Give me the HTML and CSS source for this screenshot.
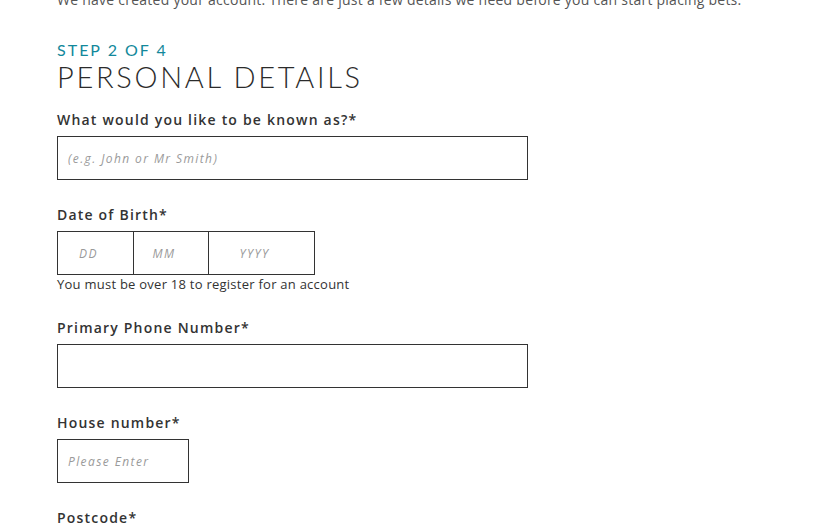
FILE: index.html
```html
<!DOCTYPE html>
<html lang="en">
<head>
<meta charset="utf-8">
<title>Personal Details</title>
<link rel="stylesheet" href="styles.css">
</head>
<body>
<main class="page">
  <p class="intro">We have created your account. There are just a few details we need before you can start placing bets.</p>
  <div class="heading">
    <div class="step">STEP 2 OF 4</div>
    <h1 class="title">PERSONAL DETAILS</h1>
  </div>
  <form class="form">
    <div class="field">
      <label class="label">What would you like to be known as?*</label>
      <input class="input input-wide" type="text" placeholder="(e.g. John or Mr Smith)">
    </div>
    <div class="field">
      <label class="label">Date of Birth*</label>
      <div class="dob">
        <input class="input dob-box dob-dd" type="text" placeholder="DD">
        <input class="input dob-box dob-mm" type="text" placeholder="MM">
        <input class="input dob-box dob-yy" type="text" placeholder="YYYY">
      </div>
      <div class="hint">You must be over 18 to register for an account</div>
    </div>
    <div class="field">
      <label class="label">Primary Phone Number*</label>
      <input class="input input-wide" type="tel">
    </div>
    <div class="field">
      <label class="label">House number*</label>
      <input class="input input-small" type="text" placeholder="Please Enter">
    </div>
    <div class="field">
      <label class="label">Postcode*</label>
    </div>
  </form>
</main>
</body>
</html>
```
FILE: styles.css
```css
html, body {
  margin: 0;
  padding: 0;
  background: #fff;
  overflow: hidden;
}
body {
  font-family: "Open Sans", "Liberation Sans", sans-serif;
  color: #333;
}
.page {
  padding-left: 57px;
}
.intro {
  margin: -10px 0 0 0;
  font-size: 14px;
  line-height: 20px;
  letter-spacing: 0.25px;
  color: #555;
}
.heading {
  margin-top: 30px;
  margin-bottom: 16px;
}
.step {
  font-family: "Lato", sans-serif;
  font-weight: 400;
  font-size: 16px;
  line-height: 20px;
  letter-spacing: 2px;
  color: #12889b;
}
.title {
  margin: 0;
  font-family: "Lato", sans-serif;
  font-weight: 300;
  font-size: 29px;
  line-height: 34px;
  letter-spacing: 2.7px;
  color: #2b2b2b;
}
.form {
  display: flex;
  flex-direction: column;
}
.field {
  display: flex;
  flex-direction: column;
  align-items: flex-start;
  margin-bottom: 25px;
}
.label {
  font-size: 14px;
  font-weight: 600;
  line-height: 20px;
  letter-spacing: 1.2px;
  color: #333;
  margin-bottom: 6px;
}
.input {
  box-sizing: border-box;
  height: 44px;
  margin: 0;
  border: 1px solid #333;
  border-radius: 0;
  background: #fff;
  padding: 0 10px;
  font-family: "Open Sans", sans-serif;
  font-size: 12px;
  font-style: italic;
  letter-spacing: 1.4px;
  color: #333;
  outline: none;
}
.input::placeholder {
  color: #9a9a9a;
  font-style: italic;
}
.input-wide {
  width: 471px;
}
.input-small {
  width: 132px;
}
.dob {
  display: flex;
}
.dob-box {
  text-align: center;
  padding: 0 14px 0 0;
}
.dob-box + .dob-box {
  margin-left: -1px;
}
.dob-dd {
  width: 77px;
}
.dob-mm {
  width: 76px;
}
.dob-yy {
  width: 107px;
}
.hint {
  font-size: 13px;
  line-height: 18px;
  letter-spacing: 0.25px;
  color: #333;
}
```
